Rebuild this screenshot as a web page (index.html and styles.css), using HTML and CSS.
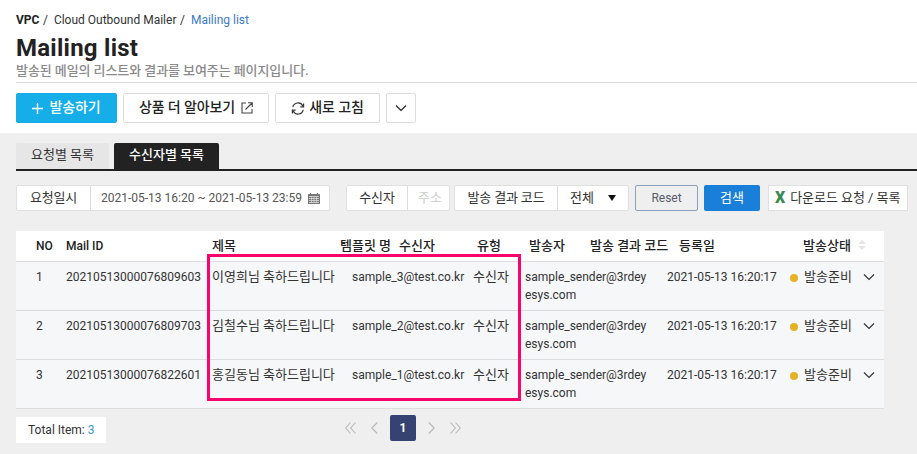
FILE: index.html
```html
<!DOCTYPE html>
<html lang="ko">
<head>
<meta charset="utf-8">
<title>Mailing list</title>
<link rel="stylesheet" href="styles.css">
</head>
<body>
<svg class="defs" width="0" height="0">
  <symbol id="down" viewBox="0 0 12 8"><path d="M1 1.5 6 6.5 11 1.5" fill="none" stroke="currentColor" stroke-width="1.2"/></symbol>
</svg>
<header class="top">
  <nav class="crumbs"><b>VPC</b><i>/</i><span class="c2">Cloud Outbound Mailer</span><i>/</i><a>Mailing list</a></nav>
  <h1>Mailing list</h1>
  <p class="desc">발송된 메일의 리스트와 결과를 보여주는 페이지입니다.</p>
  <div class="actions">
    <button class="btn primary"><svg width="11" height="11" viewBox="0 0 11 11"><path d="M5.5 0v11M0 5.5h11" stroke="#fff" stroke-width="1.3"/></svg><span>발송하기</span></button>
    <button class="btn more"><span>상품 더 알아보기</span><svg width="12" height="12" viewBox="0 0 12 12" fill="none" stroke="#444" stroke-width="1.1"><path d="M5 1H1v10h10V7M7 .8h4.3V5M11 1 4.5 7.5"/></svg></button>
    <button class="btn refresh"><svg width="14" height="13" viewBox="0 0 14 13" fill="none" stroke="#333" stroke-width="1.2"><path d="M1.8 5.2A5.3 5.3 0 0 1 11.8 4M12.2 7.8A5.3 5.3 0 0 1 2.2 9"/><path d="M12.6 1.6v3.2H9.4M1.4 11.4V8.2h3.2"/></svg><span>새로 고침</span></button>
    <button class="btn drop"><svg width="12" height="8"><use href="#down"/></svg></button>
  </div>
</header>
<main>
  <div class="tabs"><div class="tab">요청별 목록</div><div class="tab on">수신자별 목록</div></div>
  <div class="filters">
    <div class="group date"><label>요청일시</label><div class="val"><span>2021-05-13 16:20 ~ 2021-05-13 23:59</span>
      <svg width="12" height="11" viewBox="0 0 12 11"><path d="M0 1h12v10H0z" fill="#777"/><path d="M1 3.5h10M1 5.5h10M1 7.5h10M1 9.5h10" stroke="#ddd" stroke-width=".8"/><path d="M3.5 3.5V10M6 3.5V10M8.500 3.5V10" stroke="#ddd" stroke-width=".7"/><path d="M2.500 0v2M9.500 0v2" stroke="#777"/></svg></div></div>
    <div class="group rcv"><label>수신자</label><div class="val hint">주소</div></div>
    <div class="group code"><label>발송 결과 코드</label><div class="val">전체<svg width="8" height="6" viewBox="0 0 8 6"><path d="M0 0h8L4 6z" fill="#111"/></svg></div></div>
    <button class="reset">Reset</button>
    <button class="search">검색</button>
    <div class="download"><b>X</b><span>다운로드 요청 / 목록</span></div>
  </div>
  <section class="table">
    <div class="row head"><span>NO</span><span>Mail ID</span><span class="ko">제목</span><span class="ko">템플릿 명</span><span class="ko">수신자</span><span class="ko">유형</span><span class="ko">발송자</span><span class="ko">발송 결과 코드</span><span class="ko">등록일</span><span class="ko">발송상태</span><svg width="8" height="10" viewBox="0 0 8 10"><path d="M0 4 4 0l4 4zM0 6l4 4 4-4z" fill="#e5e5e5"/></svg></div>
    <div class="row"><span>1</span><span class="id">20210513000076809603</span><span class="ko">이영희님 축하드립니다</span><span class="mail">sample_3@test.co.kr</span><span class="ko">수신자</span><span class="mail">sample_sender@3rdey<br>esys.com</span><span class="time">2021-05-13 16:20:17</span><i class="dot"></i><span class="ko">발송준비</span><svg width="12" height="8"><use href="#down"/></svg></div>
    <div class="row"><span>2</span><span class="id">20210513000076809703</span><span class="ko">김철수님 축하드립니다</span><span class="mail">sample_2@test.co.kr</span><span class="ko">수신자</span><span class="mail">sample_sender@3rdey<br>esys.com</span><span class="time">2021-05-13 16:20:17</span><i class="dot"></i><span class="ko">발송준비</span><svg width="12" height="8"><use href="#down"/></svg></div>
    <div class="row"><span>3</span><span class="id">20210513000076822601</span><span class="ko">홍길동님 축하드립니다</span><span class="mail">sample_1@test.co.kr</span><span class="ko">수신자</span><span class="mail">sample_sender@3rdey<br>esys.com</span><span class="time">2021-05-13 16:20:17</span><i class="dot"></i><span class="ko">발송준비</span><svg width="12" height="8"><use href="#down"/></svg></div>
    <div class="marker"></div>
  </section>
  <footer>
    <div class="total">Total Item: <em>3</em></div>
    <div class="pager">
      <svg width="11" height="12" viewBox="0 0 11 12"><path d="M5.500 .5 .7 6l4.800 5.500M10.500 .5 5.700 6l4.800 5.500"/></svg>
      <svg width="7" height="12" viewBox="0 0 7 12"><path d="M6.300 .5.8 6l5.500 5.500"/></svg>
      <b>1</b>
      <svg width="7" height="12" viewBox="0 0 7 12"><path d="m.7.500 5.500 5.500-5.500 5.500"/></svg>
      <svg width="11" height="12" viewBox="0 0 11 12"><path d="M.5.500 5.300 6 .5 11.500M5.500.500 10.300 6l-4.800 5.500"/></svg>
    </div>
  </footer>
</main>
</body>
</html>
```
FILE: styles.css
```css
* { box-sizing: border-box; }
body { margin: 0; height: 454px; overflow: hidden; background: #efefef; color: #333; font: 12px/18px Roboto, "Noto Sans CJK KR", sans-serif; white-space: nowrap; }
svg { display: block; flex: none; }
.defs { position: absolute; }
button { font: inherit; padding: 0; cursor: pointer; }
i, em { font-style: normal; }

.top { height: 133px; padding: 11px 0 0 16px; background: #fff; }
.crumbs { display: flex; height: 18px; color: #333; }
.crumbs b { color: #222; font-weight: 700; }
.crumbs i { margin: 0 6px 0 3.500px; }
.crumbs a { color: #3b7cc4; }
h1 { margin: 5px 0 0; height: 28px; font-size: 24px; line-height: 28px; font-weight: 700; letter-spacing: .25px; color: #222; }
.desc { margin: 0; height: 21px; line-height: 17px; font-size: 13px; font-weight: 500; letter-spacing: -.08px; color: #8a8a8a; border-bottom: 1px solid #ddd; }
.actions { display: flex; gap: 6px; margin-top: 10px; }
.btn { display: flex; align-items: center; justify-content: center; height: 30px; border: 1px solid #ddd; border-radius: 2px; background: #fff; color: #222; font-size: 14px; font-weight: 500; letter-spacing: -.1px; }
.btn span { margin-top: -2px; }
.primary { width: 101px; gap: 6px; background: #16aee9; border-color: #16aee9; color: #fff; }
.more { width: 146px; gap: 6px; }
.refresh { width: 105px; gap: 4px; }
.drop { width: 30px; }

main { padding-left: 16px; }
.tabs { display: flex; gap: 5px; height: 38px; padding-top: 10px; border-bottom: 2px solid #222; }
.tab { width: 93px; height: 26px; line-height: 24px; font-size: 13px; text-align: center; background: #e6e6e6; border-radius: 2px 2px 0 0; }
.tab.on { width: 105px; background: #222; color: #fff; font-weight: 500; }

.filters { display: flex; height: 26px; margin-top: 14px; }
.group { display: flex; height: 26px; background: #fff; border: 1px solid #e0e0e0; border-radius: 2px; line-height: 24px; }
.group label { border-right: 1px solid #ddd; font-size: 13px; letter-spacing: -.15px; text-align: center; }
.group .val { display: flex; align-items: center; }
.date { width: 314px; margin-right: 16px; }
.date label { width: 74px; }
.date .val { padding-left: 10px; gap: 6px; color: #555; }
.rcv { width: 104px; margin-right: 4px; }
.rcv label { width: 61px; }
.group .hint { padding-left: 10px; font-size: 13px; color: #ccc; }
.code { width: 175px; margin-right: 6px; }
.code label { width: 103px; }
.code .val { padding-left: 12px; gap: 14px; font-size: 13px; }
.reset, .search { height: 26px; border-radius: 2px; }
.reset { width: 63px; margin-right: 6px; border: 1px solid #8aa0bb; background: #efefef; color: #555d6b; }
.search { width: 56px; margin-right: 8px; border: 0; background: #1a7fd9; color: #fff; font-size: 13px; }
.download { display: flex; align-items: center; width: 140px; padding-left: 6px; gap: 5px; background: #fff; border: 1px solid #e0e0e0; font-size: 13px; letter-spacing: -.05px; }
.download b { color: #3b8a52; font-size: 16px; font-weight: 900; }

.table { position: relative; width: 868px; margin-top: 20px; background: #f6f7f9; }
.row { display: grid; grid-template-columns: 30px 146px 140px 121px 52px 142px 123px 14px 59px 1fr; height: 49px; padding: 6px 0 0 20px; border-bottom: 1px solid #ddd; }
.row svg { margin-top: 5px; }
.row.head { grid-template-columns: 30px 146px 128px 59px 78px 52px 61px 89px 124px 55px 1fr; height: 31px; background: #fff; font-weight: 500; color: #222; }
.row.head svg { margin-top: 3px; }
.ko { font-size: 13px; }
.dot { width: 8px; height: 8px; margin-top: 6px; border-radius: 50%; background: #e6b122; }
.marker { position: absolute; left: 191px; top: 23px; width: 314px; height: 147px; border: 3px solid #f8046f; }

footer { display: flex; align-items: flex-start; height: 40px; padding-top: 6px; }
.total { width: 90px; height: 26px; margin-top: 2px; padding-left: 12px; line-height: 26px; background: #fff; }
.total em { color: #3b96d2; }
.pager { display: flex; align-items: center; margin-left: 239px; gap: 15px; fill: none; stroke: #b8b8b8; stroke-width: 1.1; }
.pager b { width: 26px; height: 26px; margin: 0 -3px; border-radius: 2px; background: #354272; color: #fff; line-height: 26px; text-align: center; }
```
